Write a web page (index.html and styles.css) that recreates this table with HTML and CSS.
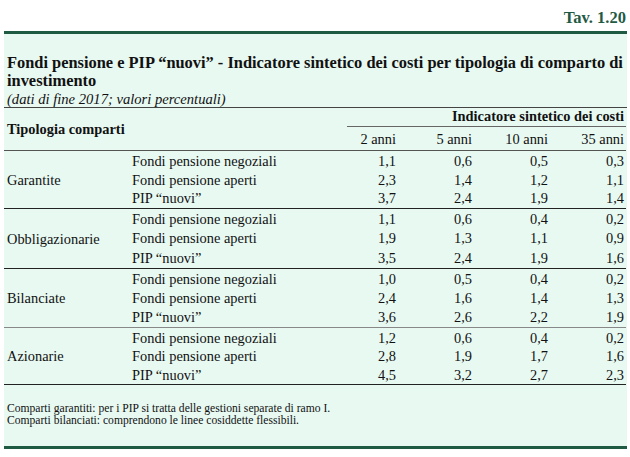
FILE: index.html
```html
<!DOCTYPE html>
<html lang="it">
<head>
<meta charset="utf-8">
<title>Tav. 1.20</title>
<link rel="stylesheet" href="styles.css">
</head>
<body>
<div class="page">
  <div class="tav">Tav. 1.20</div>
  <div class="panel">
    <h1 class="title">Fondi pensione e PIP “nuovi” - Indicatore sintetico dei costi per tipologia di comparto di investimento</h1>
    <div class="subtitle">(dati di fine 2017; valori percentuali)</div>
    <table class="data">
      <colgroup>
        <col class="c-cat"><col class="c-sub"><col class="c-num"><col class="c-num"><col class="c-num"><col class="c-num">
      </colgroup>
      <thead>
        <tr class="h1">
          <th class="tipologia" rowspan="2" colspan="2">Tipologia comparti</th>
          <th class="ind" colspan="4"><div class="ind-inner">Indicatore sintetico dei costi</div></th>
        </tr>
        <tr class="h2">
          <th class="num">2 anni</th><th class="num">5 anni</th><th class="num">10 anni</th><th class="num">35 anni</th>
        </tr>
      </thead>
      <tbody class="grp g1">
        <tr><td class="cat" rowspan="3">Garantite</td><td class="sub">Fondi pensione negoziali</td><td class="num">1,1</td><td class="num">0,6</td><td class="num">0,5</td><td class="num">0,3</td></tr>
        <tr><td class="sub">Fondi pensione aperti</td><td class="num">2,3</td><td class="num">1,4</td><td class="num">1,2</td><td class="num">1,1</td></tr>
        <tr><td class="sub">PIP “nuovi”</td><td class="num">3,7</td><td class="num">2,4</td><td class="num">1,9</td><td class="num">1,4</td></tr>
      </tbody>
      <tbody class="grp g2">
        <tr><td class="cat" rowspan="3">Obbligazionarie</td><td class="sub">Fondi pensione negoziali</td><td class="num">1,1</td><td class="num">0,6</td><td class="num">0,4</td><td class="num">0,2</td></tr>
        <tr><td class="sub">Fondi pensione aperti</td><td class="num">1,9</td><td class="num">1,3</td><td class="num">1,1</td><td class="num">0,9</td></tr>
        <tr><td class="sub">PIP “nuovi”</td><td class="num">3,5</td><td class="num">2,4</td><td class="num">1,9</td><td class="num">1,6</td></tr>
      </tbody>
      <tbody class="grp g3">
        <tr><td class="cat" rowspan="3">Bilanciate</td><td class="sub">Fondi pensione negoziali</td><td class="num">1,0</td><td class="num">0,5</td><td class="num">0,4</td><td class="num">0,2</td></tr>
        <tr><td class="sub">Fondi pensione aperti</td><td class="num">2,4</td><td class="num">1,6</td><td class="num">1,4</td><td class="num">1,3</td></tr>
        <tr><td class="sub">PIP “nuovi”</td><td class="num">3,6</td><td class="num">2,6</td><td class="num">2,2</td><td class="num">1,9</td></tr>
      </tbody>
      <tbody class="grp g4">
        <tr><td class="cat" rowspan="3">Azionarie</td><td class="sub">Fondi pensione negoziali</td><td class="num">1,2</td><td class="num">0,6</td><td class="num">0,4</td><td class="num">0,2</td></tr>
        <tr><td class="sub">Fondi pensione aperti</td><td class="num">2,8</td><td class="num">1,9</td><td class="num">1,7</td><td class="num">1,6</td></tr>
        <tr><td class="sub">PIP “nuovi”</td><td class="num">4,5</td><td class="num">3,2</td><td class="num">2,7</td><td class="num">2,3</td></tr>
      </tbody>
    </table>
    <div class="notes">
      <p>Comparti garantiti: per i PIP si tratta delle gestioni separate di ramo I.</p>
      <p>Comparti bilanciati: comprendono le linee cosiddette flessibili.</p>
    </div>
  </div>
</div>
</body>
</html>
```

FILE: styles.css
```css
html, body {
  margin: 0;
  padding: 0;
  background: #ffffff;
}

body {
  font-family: "Liberation Serif", "Times New Roman", serif;
  color: #111;
}

.page {
  width: 623px;
  margin-left: 4px;
}

.tav {
  height: 31px;
  box-sizing: border-box;
  padding-top: 9px;
  padding-right: 1px;
  text-align: right;
  font-weight: bold;
  font-size: 16.5px;
  line-height: 18px;
  color: #1f5a44;
}

.panel {
  background: #e8f9f2;
  border-top: 3px solid #1e5b42;
  border-bottom: 3px solid #1e5b42;
  height: 412px;
}

.title {
  margin: 0;
  padding: 20px 0 0 3px;
  font-size: 16.4px;
  line-height: 18px;
  font-weight: bold;
}

.subtitle {
  padding: 1px 3px 0 3px;
  font-style: italic;
  font-size: 14.6px;
  line-height: 16px;
  border-bottom: 1px solid #444;
}

.data {
  width: 622px;
  border-collapse: collapse;
  table-layout: fixed;
  font-size: 14.4px;
}

.c-cat { width: 127px; }
.c-sub { width: 191px; }
.c-num { width: 76px; }

.data th, .data td {
  padding: 0;
  white-space: nowrap;
}

.data .num {
  text-align: right;
  padding-right: 2px;
}

.h1 th {
  height: 19px;
}

.tipologia {
  text-align: left;
  padding-left: 3px !important;
  vertical-align: middle;
  font-weight: bold;
  border-bottom: 1px solid #555;
}

.ind {
  vertical-align: bottom;
}

.ind-inner {
  margin-left: 25px;
  padding-right: 2px;
  text-align: right;
  font-weight: bold;
  border-bottom: 1px solid #666;
  line-height: 17px;
  padding-bottom: 1px;
}

.h2 th {
  height: 22px;
  font-weight: normal;
  border-bottom: 1px solid #555;
  vertical-align: middle;
  padding-top: 1px;
}

.grp td {
  line-height: 18px;
}

.grp tr:first-child td {
  padding-top: 1px;
}

.g1 tr { height: 19px; }
.g2 tr { height: 20px; }
.g3 tr { height: 19.7px; }
.g4 tr { height: 19px; }

.grp .cat {
  padding-left: 3px;
  vertical-align: middle;
}

.grp .sub {
  padding-left: 1px;
}

.g1, .g2 {
  border-bottom: 1px solid #222;
}

.g3 {
  border-bottom: 1px solid #888;
}

.g4 {
  border-bottom: 1px solid #222;
}

.notes {
  padding: 18px 3px 0 3px;
  font-size: 11.6px;
  line-height: 12px;
}

.notes p {
  margin: 0;
}
```
